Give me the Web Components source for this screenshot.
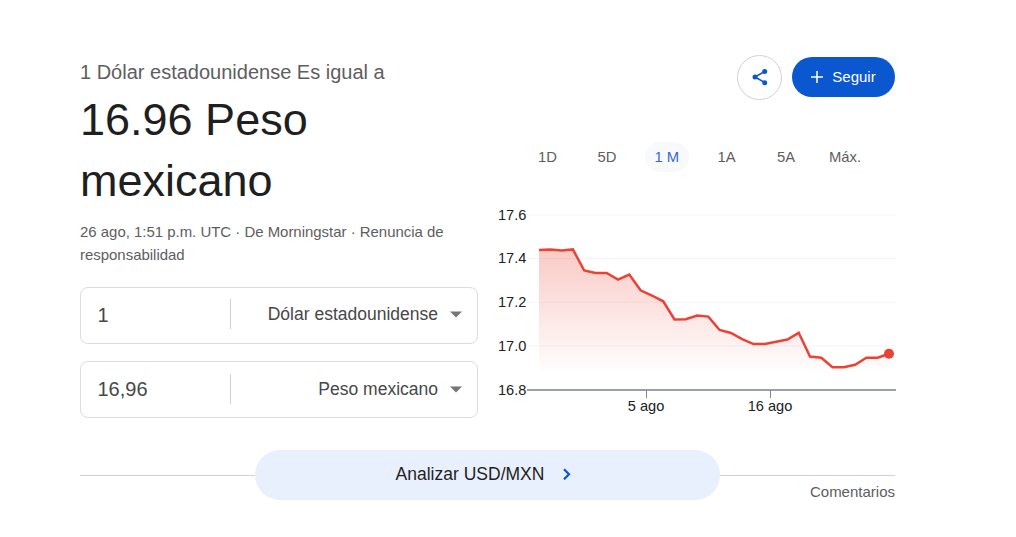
<!DOCTYPE html>
<html lang="es">
<head>
<meta charset="utf-8">
<title>USD/MXN</title>
<style>
  body {
    margin: 0;
    background: #fff;
    color: #202124;
    font-family: Arial, "Liberation Sans", sans-serif;
  }
</style>
</head>
<body>
<currency-converter></currency-converter>

<script>
class CurrencyField extends HTMLElement {
  constructor() {
    super();
    this.attachShadow({ mode: "open" });
    this.shadowRoot.innerHTML = `
      <style>
        :host {
          display: grid;
          grid-template-columns: 149px 1fr;
          align-items: center;
          box-sizing: border-box;
          height: 57px;
          border: 1px solid #dadce0;
          border-radius: 8px;
          color: #474747;
        }
        .amount { padding: 0 0 2px 16.5px; font-size: 20px; line-height: 28px; }
        .currency {
          display: flex;
          align-items: center;
          justify-content: flex-end;
          gap: 12px;
          height: 30px;
          padding-right: 15px;
          margin-bottom: var(--currency-lift, 1px);
          border-left: 1px solid #d2d2d2;
          font-size: 17.5px;
          line-height: 28px;
        }
        .currency span { margin-top: -1px; }
        svg { display: block; }
      </style>
      <div class="amount">${this.getAttribute("amount")}</div>
      <div class="currency">
        <span><slot></slot></span>
        <svg width="12" height="7" viewBox="0 0 12 7"><path d="M0 .5h12L6 6.5z" fill="#757575"/></svg>
      </div>
    `;
  }
}

class RoundButton extends HTMLElement {
  constructor() {
    super();
    this.attachShadow({ mode: "open" });
    this.shadowRoot.innerHTML = `
      <style>
        :host {
          display: flex;
          align-items: center;
          justify-content: center;
          box-sizing: border-box;
          width: 45px;
          height: 45px;
          border: 1px solid #d2d2d2;
          border-radius: 50%;
          color: #0b57d0;
        }
        :host([filled]) {
          width: 103px;
          height: 40px;
          gap: 9px;
          border: 0;
          border-radius: 20px;
          background: #0b57d0;
          color: #fff;
          font-size: 15px;
        }
      </style>
      <slot name="icon"></slot>
      <slot></slot>
    `;
  }
}

class RangeTabs extends HTMLElement {
  constructor() {
    super();
    this.attachShadow({ mode: "open" });
    const active = this.getAttribute("active");
    const tabs = ["1D", "5D", "1 M", "1A", "5A", "Máx."];
    this.shadowRoot.innerHTML = `
      <style>
        :host {
          display: grid;
          grid-template-columns: 59px 60px 59.5px 60px 59px 59px;
          font-size: 14.8px;
          line-height: 30px;
          color: #5e5e5e;
        }
        span { justify-self: center; padding: 0 9.5px; border-radius: 15px; }
        .active { background: #f8f9fa; color: #3367d6; }
      </style>
      ${tabs.map((t) => `<span class="${t === active ? "active" : ""}">${t}</span>`).join("")}
    `;
  }
}

class PriceChart extends HTMLElement {
  constructor() {
    super();
    this.attachShadow({ mode: "open" });
    this.render();
  }

  render() {
    const values = [
      50, 49.5, 50.4, 49.4, 70.5, 73, 73, 79.6, 74.5, 90.3, 95.5, 101.3, 119.5, 119.2, 115.6, 116.6,
      130, 133, 139.2, 144.1, 144, 141.8, 139.5, 132.8, 156.5, 157.7, 167.2, 167.2, 164.7, 157.8, 157.8, 153.7
    ];
    const points = values.map((y, i) => `${(41 + i * 11.29).toFixed(1)},${y}`).join(" ");
    const rows = [["17.6", 15], ["17.4", 58.5], ["17.2", 102.3], ["17.0", 146], ["16.8", 190]];
    const ticks = [["5 ago", 148.5], ["16 ago", 272.5]];

    this.shadowRoot.innerHTML = `
      <style>
        :host { display: block; }
        svg { display: block; }
        text { font-size: 14.6px; fill: #202124; }
        .grid { stroke: #f5f5f5; }
        .line { fill: none; stroke: #ea4335; stroke-width: 2.5; }
      </style>
      <svg width="398" height="220" viewBox="0 0 398 220">
        <defs>
          <linearGradient id="fade" gradientUnits="userSpaceOnUse" x1="0" y1="50" x2="0" y2="175">
            <stop offset="0" stop-color="#ea4335" stop-opacity=".28"/>
            <stop offset="1" stop-color="#ea4335" stop-opacity="0"/>
          </linearGradient>
        </defs>
        ${rows.slice(0, 4).map(([, y]) => `<line class="grid" x1="29" x2="398" y1="${y}" y2="${y}"/>`).join("")}
        <polygon points="41,175 ${points} 391,175" fill="url(#fade)"/>
        <path d="M29 190H398" stroke="#9aa0a6" stroke-width="2"/>
        ${rows.map(([label, y]) => `<text x="0" y="${Math.floor(y) + 5}">${label}</text>`).join("")}
        ${ticks.map(([label, x]) => `
          <path d="M${x} 190v8" stroke="#80868b"/>
          <text x="${x - 0.5}" y="211" text-anchor="middle">${label}</text>`).join("")}
        <polyline class="line" points="${points}"/>
        <circle cx="391" cy="153.7" r="5" fill="#ea4335"/>
      </svg>
    `;
  }
}

class MoreFooter extends HTMLElement {
  constructor() {
    super();
    this.attachShadow({ mode: "open" });
    this.shadowRoot.innerHTML = `
      <style>
        :host {
          display: grid;
          grid-template-columns: 175px 465px 175px;
        }
        .rule { margin-top: 25px; border-top: 1px solid #d2d2d2; }
        .more {
          display: flex;
          align-items: center;
          justify-content: center;
          gap: 19px;
          box-sizing: border-box;
          height: 50px;
          padding: 0 8px 2px 0;
          border-radius: 25px;
          background: #e8effd;
          color: #1f1f1f;
          font-size: 17.5px;
        }
        .more svg { display: block; }
        .feedback { padding-top: 7px; text-align: right; font-size: 15px; line-height: 18px; color: #5e5e5e; }
      </style>
      <div class="rule"></div>
      <div class="more">
        <span><slot></slot></span>
        <svg width="8" height="12" viewBox="0 0 8 12"><path d="M1 1.3l5 5-5 5" fill="none" stroke="#0b57d0" stroke-width="2.2"/></svg>
      </div>
      <div class="rule feedback"><slot name="feedback"></slot></div>
    `;
  }
}

class CurrencyConverter extends HTMLElement {
  constructor() {
    super();
    this.attachShadow({ mode: "open" });
    this.shadowRoot.innerHTML = `
      <style>
        :host { display: block; width: 815px; padding: 55px 0 0 80px; }
        .columns { display: grid; grid-template-columns: 398px 398px; gap: 20px; height: 395px; }
        .source { padding-top: 4px; font-size: 20px; line-height: 26px; color: #5e5e5e; }
        .result { padding-top: 4px; font-size: 45px; line-height: 61px; color: #1f1f1f; }
        .meta { padding-top: 9px; font-size: 14.95px; line-height: 23px; color: #5e5e5e; white-space: nowrap; }
        currency-field { margin-top: 21px; --currency-lift: 3px; }
        currency-field + currency-field { margin-top: 17px; --currency-lift: 1px; }
        .actions { display: flex; align-items: center; justify-content: flex-end; gap: 10px; padding-right: 1px; }
        round-button[filled] { margin-bottom: 2px; }
        range-tabs { margin: 42px 0 0 20px; }
        price-chart { margin-top: 28px; }
      </style>
      <div class="columns">
        <div>
          <div class="source">1 Dólar estadounidense Es igual a</div>
          <div class="result">16.96 Peso<br>mexicano</div>
          <div class="meta">26 ago, 1:51 p.m. UTC · De Morningstar · Renuncia de<br>responsabilidad</div>
          <currency-field amount="1">Dólar estadounidense</currency-field>
          <currency-field amount="16,96">Peso mexicano</currency-field>
        </div>
        <div>
          <div class="actions">
            <round-button>
              <svg slot="icon" width="16" height="17" viewBox="0 0 16 17">
                <path d="M12.7 2.5L3 8l9.7 5.5" fill="none" stroke="#0b57d0" stroke-width="1.7"/>
                <g fill="#0b57d0"><circle cx="12.7" cy="2.5" r="2.5"/><circle cx="3" cy="8" r="2.5"/><circle cx="12.7" cy="13.7" r="2.5"/></g>
              </svg>
            </round-button>
            <round-button filled>
              <svg slot="icon" width="12" height="12" viewBox="0 0 12 12"><path d="M6 0v12M0 6h12" stroke="#fff" stroke-width="1.5"/></svg>
              Seguir
            </round-button>
          </div>
          <range-tabs active="1 M"></range-tabs>
          <price-chart></price-chart>
        </div>
      </div>
      <more-footer>Analizar USD/MXN<span slot="feedback">Comentarios</span></more-footer>
    `;
  }
}

customElements.define("currency-field", CurrencyField);
customElements.define("round-button", RoundButton);
customElements.define("range-tabs", RangeTabs);
customElements.define("price-chart", PriceChart);
customElements.define("more-footer", MoreFooter);
customElements.define("currency-converter", CurrencyConverter);
</script>
</body>
</html>
